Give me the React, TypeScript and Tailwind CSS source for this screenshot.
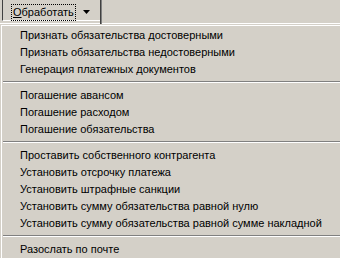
export default function App() {
  const groups = [
    [
      "Признать обязательства достоверными",
      "Признать обязательства недостоверными",
      "Генерация платежных документов",
    ],
    ["Погашение авансом", "Погашение расходом", "Погашение обязательства"],
    [
      "Проставить собственного контрагента",
      "Установить отсрочку платежа",
      "Установить штрафные санкции",
      "Установить сумму обязательства равной нулю",
      "Установить сумму обязательства равной сумме накладной",
    ],
    ["Разослать по почте"],
  ];

  return (
    <div className="w-[340px] h-[258px] overflow-hidden bg-[#d4d0c8] text-[11px] text-black font-['Liberation_Sans',sans-serif]">
      {/* toolbar with the pressed dropdown button */}
      <div className="flex h-[24px] border-b border-white">
        <div className="w-[2px]" />
        <div className="flex items-start w-[98px] h-[21px] border-l border-[#404040] border-b border-b-white">
          <span className="mt-[4px] ml-[8px] px-[1px] h-[17px] leading-[15px] border border-dotted border-black">
            <span className="underline">О</span>бработать
          </span>
          <svg width="7" height="4" viewBox="0 0 7 4" className="mt-[10px] ml-[7px]">
            <path d="M0 0h7L3.5 4z" fill="#000" />
          </svg>
        </div>
        <div className="w-[1px] h-[24px] bg-[#404040]" />
        <div className="w-[1px] h-[24px] bg-[#808080]" />
      </div>

      {/* dropdown menu */}
      <div className="w-[380px] border-t border-l border-[#d4d0c8]">
        <div className="border-t border-l border-white p-[1px]">
          {groups.map((items, gi) => (
            <div key={gi}>
              {gi > 0 && (
                <div className="h-[9px] pt-[3px]">
                  <div className="border-t border-[#808080] border-b border-b-white" />
                </div>
              )}
              {items.map((label) => (
                <div key={label} className="h-[17px] leading-[17px] pl-[17px] whitespace-nowrap">
                  {label}
                </div>
              ))}
            </div>
          ))}
        </div>
      </div>
    </div>
  );
}
